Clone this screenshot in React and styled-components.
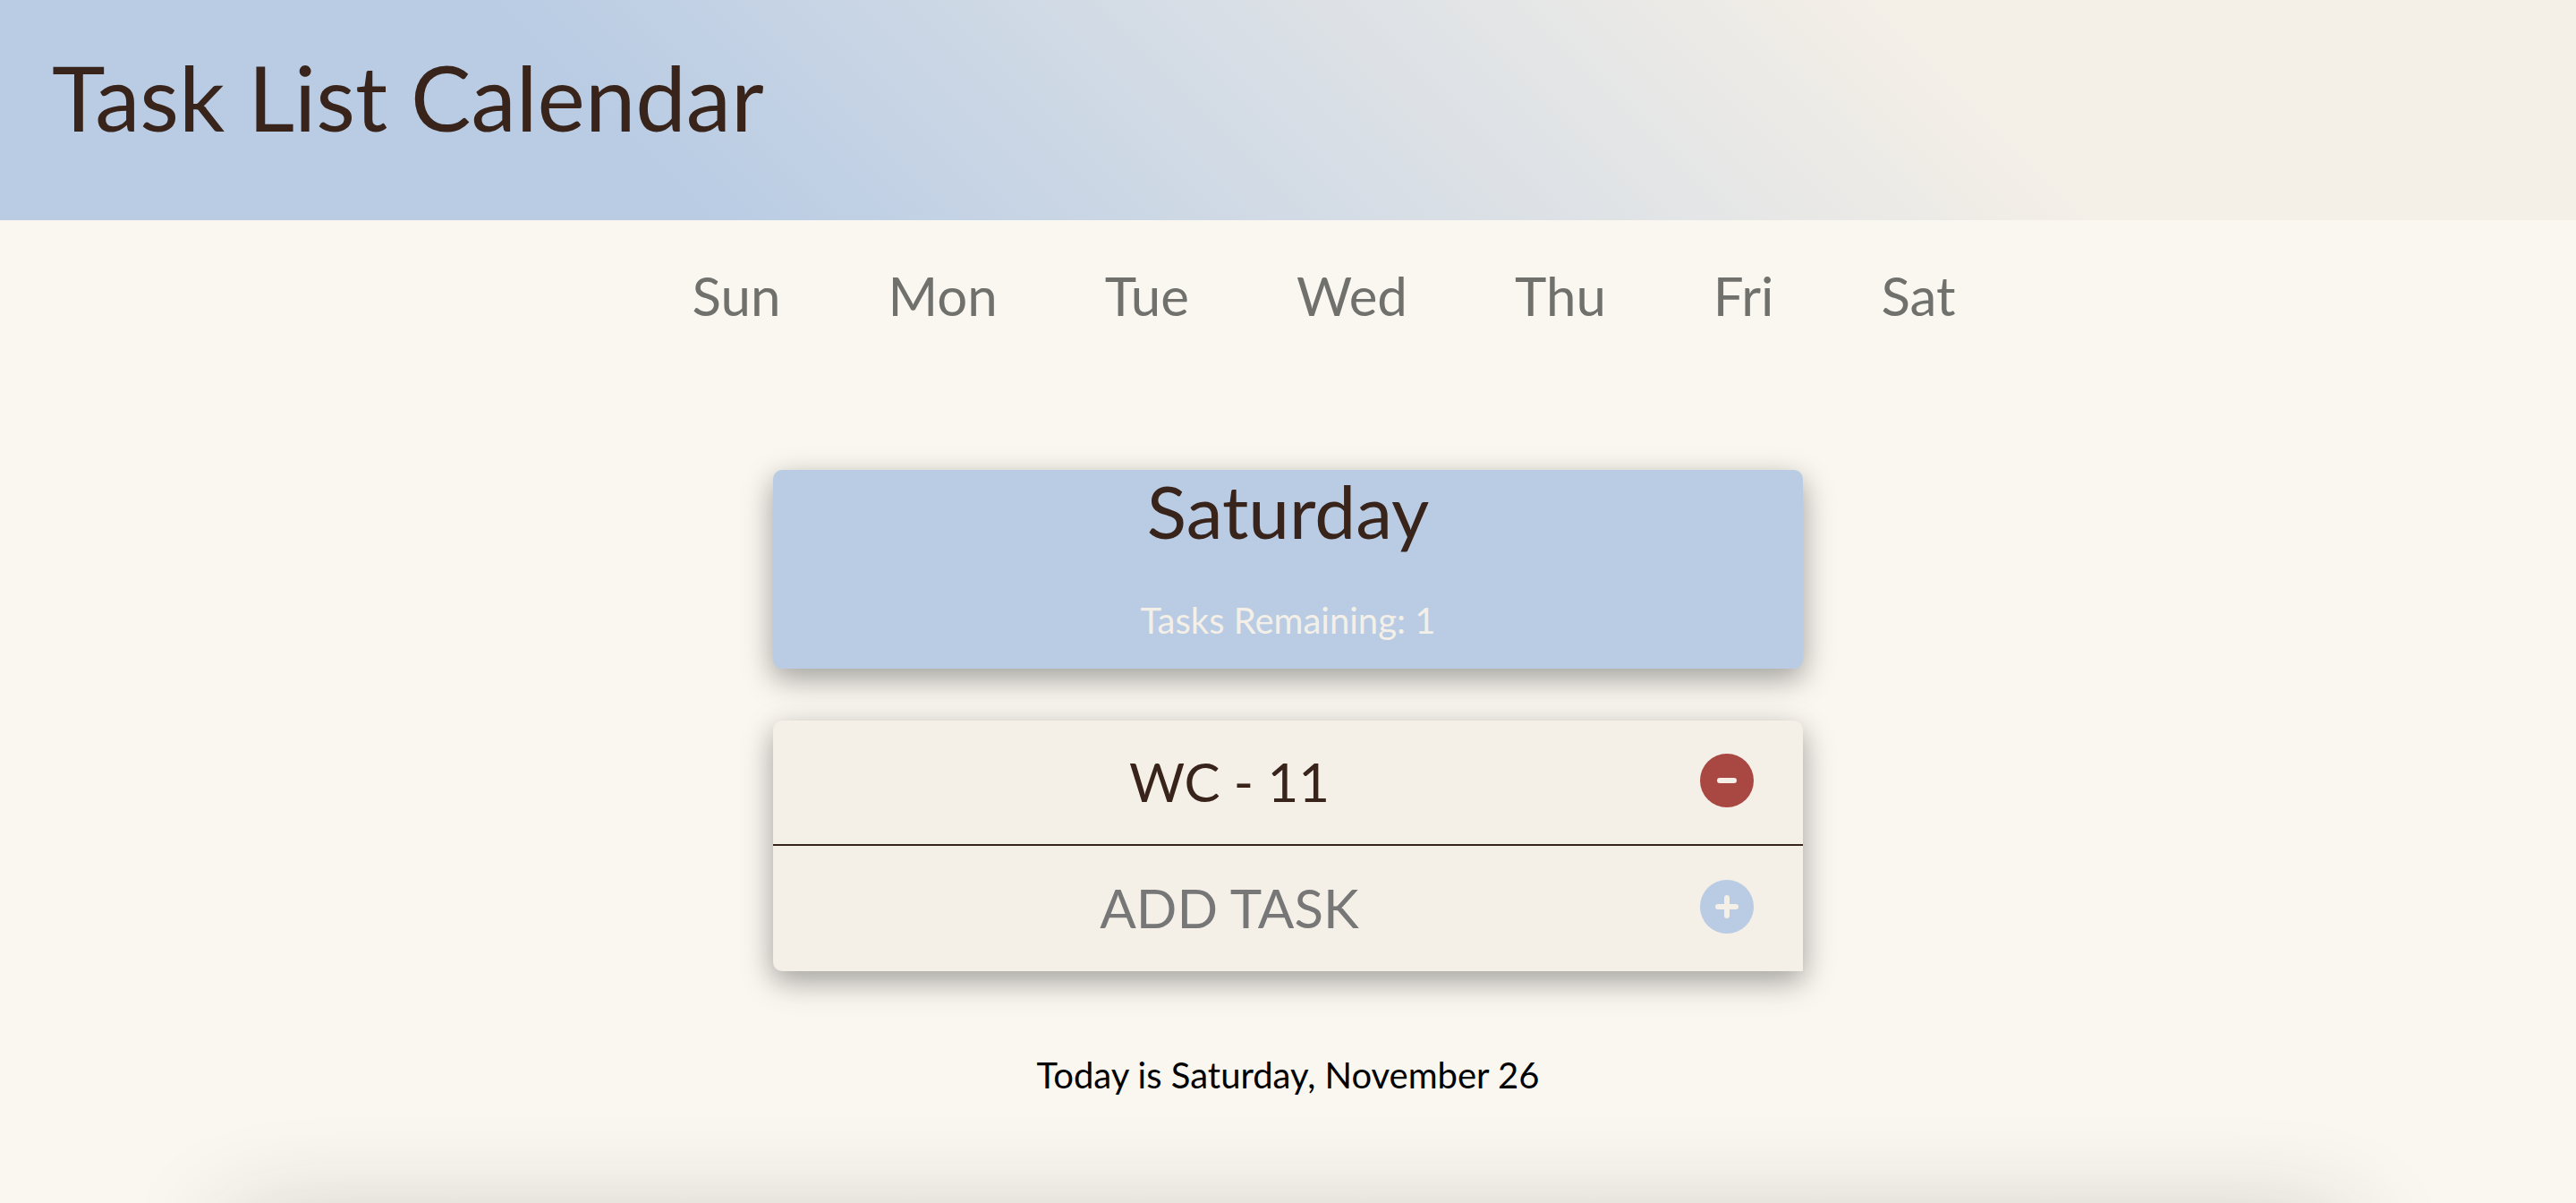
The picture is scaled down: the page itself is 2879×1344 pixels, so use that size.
import React, { useState } from "react";
import styled, { createGlobalStyle } from "styled-components";

const ink = "#38241a";
const blue = "#b9cce4";
const cream = "#f4efe7";
const red = "#a94742";
const cardShadow = "0 10px 28px rgba(0, 0, 0, 0.2), 0 12px 40px rgba(0, 0, 0, 0.19)";

const GlobalStyle = createGlobalStyle`
  *, *::before, *::after { box-sizing: border-box; }
  body {
    margin: 0;
    background: #faf7f1;
    color: #000;
    font-family: Lato, "Open Sans", sans-serif;
  }
  h1, h2, p, ul { margin: 0; padding: 0; font-weight: 400; }
`;

const Page = styled.div`
  position: relative;
  min-height: 100vh;
  overflow: hidden;

  &::after {
    content: "";
    position: absolute;
    top: 100%;
    left: 9%;
    right: 9%;
    height: 200px;
    box-shadow: 0 24px 120px rgba(30, 35, 25, 0.24);
  }
`;

const Header = styled.header`
  padding: 48px 58px 78px;
  background: linear-gradient(45deg, ${blue} 25%, ${cream} 75%);
`;

const Title = styled.h1`
  color: ${ink};
  font-size: 101px;
  line-height: 120px;
`;

const DayList = styled.ul`
  display: flex;
  justify-content: center;
  gap: 120px;
  padding: 48px 0 0 80px;
  list-style: none;
`;

const DayLink = styled.a`
  display: block;
  color: #70706c;
  font-size: 60px;
  line-height: 72px;
  text-decoration: none;
`;

const Main = styled.main`
  display: flex;
  flex-direction: column;
  align-items: center;
  padding: 159px 0 80px;
`;

const DayCard = styled.section`
  width: 40%;
  padding-bottom: 30px;
  border-radius: 10px;
  background: ${blue};
  box-shadow: ${cardShadow};
  text-align: center;
`;

const DayName = styled.h2`
  color: ${ink};
  font-size: 82px;
  line-height: 90px;
`;

const Remaining = styled.p`
  margin-top: 54px;
  color: ${cream};
  font-size: 40px;
  line-height: 48px;
`;

const TaskList = styled.ul`
  width: 40%;
  margin-top: 58px;
  border-radius: 10px 10px 0 10px;
  background: ${cream};
  box-shadow: ${cardShadow};
  list-style: none;
`;

const TaskRow = styled.li`
  display: flex;
  align-items: center;
  gap: 16px;
  height: 142px;
  padding: 0 55px 4px 0;

  & + & {
    border-top: 2px solid ${ink};
  }

  &:first-child {
    height: 138px;
  }
`;

const TaskInput = styled.input`
  flex: 1;
  min-width: 0;
  padding: 2px 0 0;
  border: 0;
  outline: 0;
  background: transparent;
  color: ${ink};
  font: inherit;
  font-size: 60px;
  line-height: 72px;
  text-align: center;

  &::placeholder {
    color: #777;
    opacity: 1;
  }
`;

const RoundButton = styled.button`
  display: block;
  flex: none;
  width: 60px;
  height: 60px;
  padding: 0;
  border: 0;
  border-radius: 50%;
  background: ${({ $tone }) => $tone};
  cursor: pointer;

  svg {
    display: block;
    width: 60px;
    height: 60px;
    stroke: ${cream};
    stroke-width: 6;
    stroke-linecap: round;
  }
`;

const Today = styled.p`
  margin-top: 92px;
  font-size: 40px;
  line-height: 48px;
`;

const days = ["Sun", "Mon", "Tue", "Wed", "Thu", "Fri", "Sat"];

export default function App() {
  const [task, setTask] = useState("WC - 11");
  const [draft, setDraft] = useState("");

  return (
    <Page>
      <GlobalStyle />
      <Header>
        <Title>Task List Calendar</Title>
      </Header>
      <nav aria-label="Days of the week">
        <DayList>
          {days.map((day) => (
            <li key={day}>
              <DayLink href={`#${day.toLowerCase()}`}>{day}</DayLink>
            </li>
          ))}
        </DayList>
      </nav>
      <Main>
        <DayCard>
          <DayName>Saturday</DayName>
          <Remaining>Tasks Remaining: 1</Remaining>
        </DayCard>
        <TaskList>
          <TaskRow>
            <TaskInput
              aria-label="Task"
              value={task}
              onChange={(e) => setTask(e.target.value)}
            />
            <RoundButton type="button" aria-label="Remove task" $tone={red}>
              <svg viewBox="0 0 60 60" aria-hidden="true">
                <path d="M22 30H38" />
              </svg>
            </RoundButton>
          </TaskRow>
          <TaskRow>
            <TaskInput
              aria-label="New task"
              placeholder="ADD TASK"
              value={draft}
              onChange={(e) => setDraft(e.target.value)}
            />
            <RoundButton type="button" aria-label="Add task" $tone={blue}>
              <svg viewBox="0 0 60 60" aria-hidden="true">
                <path d="M20 30H40M30 20V40" />
              </svg>
            </RoundButton>
          </TaskRow>
        </TaskList>
        <Today>Today is Saturday, November 26</Today>
      </Main>
    </Page>
  );
}
